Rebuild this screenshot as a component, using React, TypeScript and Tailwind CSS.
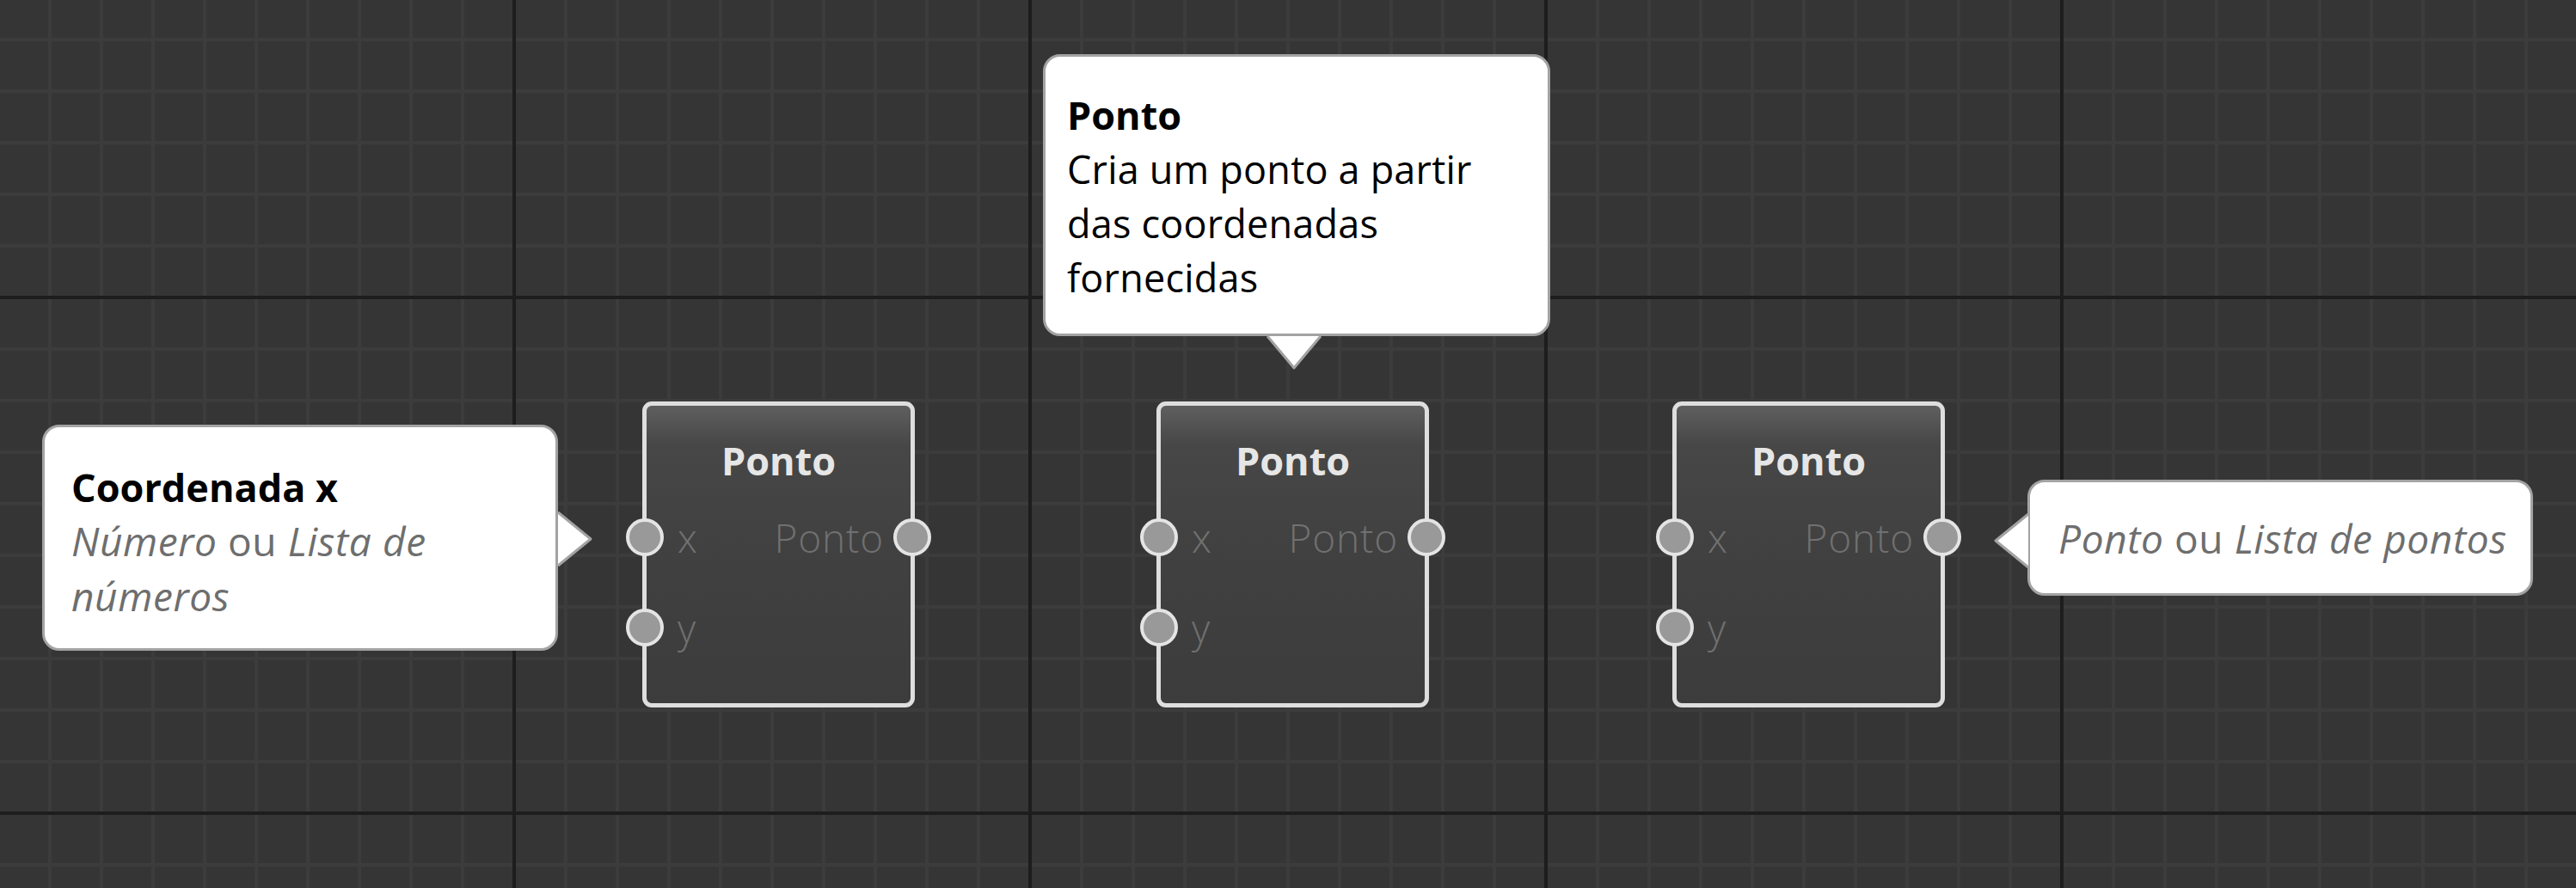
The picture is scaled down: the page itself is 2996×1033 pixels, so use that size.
import React from "react";

function Grid() {
  return (
    <svg className="absolute inset-0" width="2996" height="1033" xmlns="http://www.w3.org/2000/svg">
      <defs>
        <pattern id="minor" x="0" y="0" width="60" height="60" patternUnits="userSpaceOnUse">
          <rect x="56" y="0" width="4" height="60" fill="#3c3c3c" />
          <rect x="0" y="44" width="60" height="4" fill="#3c3c3c" />
        </pattern>
        <pattern id="major" x="0" y="0" width="600" height="600" patternUnits="userSpaceOnUse">
          <rect x="596" y="0" width="4" height="600" fill="#1d1d1d" />
          <rect x="0" y="344" width="600" height="4" fill="#1d1d1d" />
        </pattern>
      </defs>
      <rect width="2996" height="1033" fill="url(#minor)" />
      <rect width="2996" height="1033" fill="url(#major)" />
    </svg>
  );
}

function Port() {
  return <div className="w-[44px] h-[44px] rounded-full border-[4px] border-[#e4e4e4] bg-[#999999] shrink-0" />;
}

function NodeBox({ left }: { left: number }) {
  return (
    <div
      className="absolute top-[467px] w-[317px] h-[356px] rounded-[11px] border-[5px] border-[#dedede] bg-[linear-gradient(to_bottom,#5f5f5f_0px,#474747_45px,#414141_160px,#3c3c3c_100%)] flex flex-col font-['Open_Sans',sans-serif]"
      style={{ left }}
    >
      <div className="h-[123px] pt-[32px] text-center text-[45px] leading-[63px] font-bold text-[#e6e6e6]">Ponto</div>
      <div className="h-[60px] flex items-center justify-between">
        <div className="flex items-center ml-[-24px]">
          <Port />
          <span className="ml-[16px] text-[46px] leading-[60px] font-light text-[#707070]">x</span>
        </div>
        <div className="flex items-center mr-[-24px]">
          <span className="mr-[11px] text-[46px] leading-[60px] font-light tracking-[0.8px] text-[#707070]">Ponto</span>
          <Port />
        </div>
      </div>
      <div className="mt-[45px] h-[60px] flex items-center">
        <div className="flex items-center ml-[-24px]">
          <Port />
          <span className="ml-[16px] text-[46px] leading-[60px] font-light text-[#707070]">y</span>
        </div>
      </div>
    </div>
  );
}

export default function App() {
  return (
    <div className="relative w-[2996px] h-[1033px] overflow-hidden bg-[#353535] font-['Open_Sans',sans-serif]">
      <Grid />

      <NodeBox left={747} />
      <NodeBox left={1345} />
      <NodeBox left={1945} />

      {/* Tooltip top */}
      <div className="absolute left-[1213px] top-[63px] w-[590px] h-[328px] rounded-[20px] border-[3px] border-[#a3a3a3] bg-white pl-[25px] pt-[36px]">
        <div className="text-[45px] leading-[63px] font-bold text-black">Ponto</div>
        <div className="text-[45px] leading-[63px] tracking-[0.2px] text-black">Cria um ponto a partir</div>
        <div className="text-[45px] leading-[63px] tracking-[0.2px] text-black">das coordenadas</div>
        <div className="text-[45px] leading-[63px] tracking-[0.2px] text-black">fornecidas</div>
        <svg className="absolute left-[257px] top-[325px] overflow-visible" width="64" height="40" viewBox="0 0 64 40">
          <polygon points="1,0 63,0 32,37" fill="#ffffff" />
          <polyline points="1,0 32,37 63,0" fill="none" stroke="#a3a3a3" strokeWidth="3" strokeLinejoin="round" />
        </svg>
      </div>

      {/* Tooltip left */}
      <div className="absolute left-[49px] top-[494px] w-[600px] h-[263px] rounded-[20px] border-[3px] border-[#a3a3a3] bg-white pl-[31px] pt-[38px]">
        <div className="text-[45px] leading-[63px] font-bold text-black">Coordenada x</div>
        <div className="text-[46px] leading-[63px] tracking-[0.6px] text-[#6e6e6e] whitespace-nowrap">
          <span className="italic">Número</span> ou <span className="italic">Lista de</span>
        </div>
        <div className="text-[46px] leading-[65px] tracking-[0.6px] text-[#6e6e6e] italic">números</div>
        <svg className="absolute left-[597px] top-[98px] overflow-visible" width="40" height="64" viewBox="0 0 40 64">
          <polygon points="0,1 0,63 38,32" fill="#ffffff" />
          <polyline points="0,1 38,32 0,63" fill="none" stroke="#a3a3a3" strokeWidth="3" strokeLinejoin="round" />
        </svg>
      </div>

      {/* Tooltip right */}
      <div className="absolute left-[2358px] top-[558px] w-[588px] h-[135px] rounded-[20px] border-[3px] border-[#a3a3a3] bg-white pl-[33px] pt-[34px]">
        <div className="text-[46px] leading-[63px] tracking-[0.6px] text-[#6e6e6e] whitespace-nowrap">
          <span className="italic">Ponto</span> ou <span className="italic">Lista de pontos</span>
        </div>
        <svg className="absolute left-[-42px] top-[36px] overflow-visible" width="40" height="64" viewBox="0 0 40 64">
          <polygon points="40,1 40,63 2,32" fill="#ffffff" />
          <polyline points="40,1 2,32 40,63" fill="none" stroke="#a3a3a3" strokeWidth="3" strokeLinejoin="round" />
        </svg>
      </div>
    </div>
  );
}
